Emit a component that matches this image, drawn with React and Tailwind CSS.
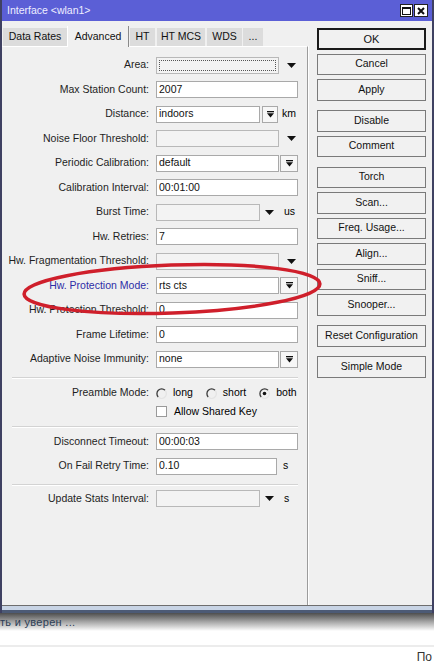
import React from "react";

/* =======================
   Small glyphs
======================= */
const DropArrow = ({ className = "" }) => (
  <svg width="9" height="5" viewBox="0 0 9 5" className={className}>
    <path d="M0 0 L9 0 L4.5 5 Z" fill="#111" />
  </svg>
);

const ComboBtn = ({ className = "" }) => (
  <div
    className={`h-[17px] border border-[#a9a9a9] bg-[#f7f7f7] flex items-center justify-center ${className}`}
  >
    <svg width="7" height="7" viewBox="0 0 7 7">
      <rect x="0" y="0" width="7" height="1.3" fill="#111" />
      <path d="M0 2.3 L7 2.3 L3.5 6.6 Z" fill="#111" />
    </svg>
  </div>
);

const Radio = ({ checked }) => (
  <svg width="11" height="11" viewBox="0 0 11 11" className="shrink-0">
    <path d="M2.3 9 A4.4 4.4 0 0 1 9 2.3" fill="none" stroke="#3a3a3a" strokeWidth="1.3" />
    <path d="M9 2.3 A4.4 4.4 0 0 1 2.3 9" fill="none" stroke="#e4e4e4" strokeWidth="1.3" />
    {checked && <circle cx="5.5" cy="5.5" r="1.8" fill="#111" />}
  </svg>
);

/* =======================
   Form pieces
======================= */
const Input = ({ className = "", value, disabled, focus }) => (
  <div
    className={`h-[17px] border flex items-center pl-[2px] text-[10.5px] text-[#111] ${
      disabled ? "bg-[#f3f3f3] border-[#b8b8b8]" : "bg-white border-[#a9a9a9]"
    } ${className}`}
  >
    {focus ? (
      <div className="w-full h-[11px] mr-[2px] border border-dotted border-[#555]" />
    ) : (
      value
    )}
  </div>
);

const Field = ({ label, blue, children, className = "h-[24.5px]" }) => (
  <div className={`flex items-center ${className}`}>
    <div
      className={`w-[147px] shrink-0 text-right whitespace-nowrap ${
        blue ? "text-[#2d2da6]" : "text-[#1e1e1e]"
      }`}
    >
      {label}:
    </div>
    <div className="ml-[7px] flex items-center">{children}</div>
  </div>
);

const Separator = ({ className = "" }) => (
  <div className={`ml-[10px] w-[286px] h-px bg-[#d3d3d3] shadow-[0_1px_0_#ffffff] ${className}`} />
);

const SideButton = ({ children, primary }) => (
  <div
    className={`h-[21.5px] w-[109px] flex items-center justify-center bg-[#f1f1f1] text-[#111] ${
      primary
        ? "border-2 border-[#1a1a1a] text-[11px]"
        : "border border-[#7a7a7a] text-[10.5px]"
    }`}
  >
    {children}
  </div>
);

const tabs = [
  { name: "Data Rates", w: "w-[64px] ml-px" },
  { name: "Advanced", w: "w-[62px]", active: true },
  { name: "HT", w: "w-[25px] ml-px" },
  { name: "HT MCS", w: "w-[48px] ml-[2px]" },
  { name: "WDS", w: "w-[35px] ml-[2px]" },
  { name: "...", w: "w-[20px] ml-px" },
];

/* =======================
   App
======================= */
export default function App() {
  return (
    <div
      className="relative w-[434px] h-[665px] overflow-hidden bg-white text-[10.5px]"
      style={{ fontFamily: '"Liberation Sans", Arial, sans-serif' }}
    >
      {/* Window */}
      <div className="w-[434px] border-x-2 border-[#3f4162] bg-[#f0f0f0]">
        {/* Title bar */}
        <div className="h-[21px] bg-[#5b5fd6] flex items-center justify-between pl-[5px] pr-[4px]">
          <span className="text-[#eeeeff] text-[10.5px]">Interface &lt;wlan1&gt;</span>
          <div className="flex gap-px">
            <div className="w-[13px] h-[13px] bg-white border border-[#222] flex items-center justify-center">
              <div className="w-[9px] h-[8px] border border-[#111] border-t-2" />
            </div>
            <div className="w-[14px] h-[13px] bg-white border border-[#222] flex items-center justify-center">
              <svg width="8" height="8" viewBox="0 0 8 8">
                <path d="M1 1 L7 7 M7 1 L1 7" stroke="#111" strokeWidth="2" />
              </svg>
            </div>
          </div>
        </div>

        {/* Body */}
        <div className="flex h-[585px] border-b border-[#6e6e6e]">
          {/* Left: tabs + panel */}
          <div className="w-[306px] flex flex-col">
            <div className="h-[25px] pt-[4px] flex items-end">
              {tabs.map((t) =>
                t.active ? (
                  <div
                    key={t.name}
                    className={`${t.w} h-[21px] bg-[#f0f0f0] border-l border-white border-r border-r-[#8a8a8a] flex items-center justify-center text-[#111] relative top-px`}
                  >
                    {t.name}
                  </div>
                ) : (
                  <div
                    key={t.name}
                    className={`${t.w} h-[18px] bg-[#dcdcdc] flex items-center justify-center text-[#111]`}
                  >
                    {t.name}
                  </div>
                )
              )}
            </div>

            <div className="flex-1 border-t border-white border-r border-r-[#9c9c9c] shadow-[1px_0_0_#ffffff] pt-[6px]">
              <Field label="Area">
                <Input className="w-[123px]" disabled focus />
                <DropArrow className="ml-[8px]" />
              </Field>
              <Field label="Max Station Count">
                <Input className="w-[142px]" value="2007" />
              </Field>
              <Field label="Distance">
                <Input className="w-[104px]" value="indoors" />
                <ComboBtn className="ml-[2px] w-[16px]" />
                <span className="ml-[4px]">km</span>
              </Field>
              <Field label="Noise Floor Threshold">
                <Input className="w-[123px]" disabled />
                <DropArrow className="ml-[8px]" />
              </Field>
              <Field label="Periodic Calibration">
                <Input className="w-[123px]" value="default" />
                <ComboBtn className="ml-px w-[18px]" />
              </Field>
              <Field label="Calibration Interval">
                <Input className="w-[142px]" value="00:01:00" />
              </Field>
              <Field label="Burst Time">
                <Input className="w-[104px]" disabled />
                <DropArrow className="ml-[5px]" />
                <span className="ml-[10px]">us</span>
              </Field>
              <Field label="Hw. Retries">
                <Input className="w-[142px]" value="7" />
              </Field>
              <Field label="Hw. Fragmentation Threshold">
                <Input className="w-[123px]" disabled />
                <DropArrow className="ml-[8px]" />
              </Field>
              <Field label="Hw. Protection Mode" blue>
                <Input className="w-[123px]" value="rts cts" />
                <ComboBtn className="ml-px w-[18px]" />
              </Field>
              <Field label="Hw. Protection Threshold">
                <Input className="w-[142px]" value="0" />
              </Field>
              <Field label="Frame Lifetime">
                <Input className="w-[142px]" value="0" />
              </Field>
              <Field label="Adaptive Noise Immunity">
                <Input className="w-[123px]" value="none" />
                <ComboBtn className="ml-px w-[18px]" />
              </Field>

              <Separator className="mt-[5px]" />

              <Field label="Preamble Mode" className="h-[19px] mt-[6px]">
                <Radio />
                <span className="ml-[6px]">long</span>
                <span className="ml-[13px]">
                  <Radio />
                </span>
                <span className="ml-[6px]">short</span>
                <span className="ml-[13px]">
                  <Radio checked />
                </span>
                <span className="ml-[6px]">both</span>
              </Field>
              <div className="flex items-center h-[18px] pl-[154px]">
                <div className="w-[11px] h-[11px] border border-[#9a9a9a] bg-white" />
                <span className="ml-[7px]">Allow Shared Key</span>
              </div>

              <Separator className="mt-[5px]" />

              <Field label="Disconnect Timeout" className="h-[24.5px] mt-[3px]">
                <Input className="w-[142px]" value="00:00:03" />
              </Field>
              <Field label="On Fail Retry Time">
                <Input className="w-[121px]" value="0.10" />
                <span className="ml-[6px]">s</span>
              </Field>

              <Separator className="mt-[5px]" />

              <Field label="Update Stats Interval" className="h-[24.5px] mt-[2px]">
                <Input className="w-[104px]" disabled />
                <DropArrow className="ml-[5px]" />
                <span className="ml-[10px]">s</span>
              </Field>
            </div>
          </div>

          {/* Right: buttons */}
          <div className="w-[124px] pt-[7px] pl-[9px] flex flex-col gap-[9.5px]">
            <div className="flex flex-col gap-[4px]">
              <SideButton primary>OK</SideButton>
              <SideButton>Cancel</SideButton>
              <SideButton>Apply</SideButton>
            </div>
            <div className="flex flex-col gap-[4px]">
              <SideButton>Disable</SideButton>
              <SideButton>Comment</SideButton>
            </div>
            <div className="flex flex-col gap-[4px]">
              <SideButton>Torch</SideButton>
              <SideButton>Scan...</SideButton>
              <SideButton>Freq. Usage...</SideButton>
              <SideButton>Align...</SideButton>
              <SideButton>Sniff...</SideButton>
              <SideButton>Snooper...</SideButton>
            </div>
            <SideButton>Reset Configuration</SideButton>
            <SideButton>Simple Mode</SideButton>
          </div>
        </div>

        {/* Bottom frame */}
        <div className="h-[4px] bg-[#c8d4e5]" />
        <div className="h-[3px] bg-[#4c5a75]" />
      </div>

      {/* Page behind the window */}
      <div className="h-[18px] bg-gradient-to-b from-[#4e4e4e] via-[#a8a8a8] to-white flex items-center">
        <span className="text-[11px] text-[#2c3e57] tracking-[0.3px]">ть и уверен ...</span>
      </div>
      <div className="h-[14px]" />
      <div className="h-[2px] bg-[#ececec]" />
      <div className="flex justify-end pr-[2px] pt-[3px]">
        <span className="text-[12px] leading-[14px] text-[#333]">По</span>
      </div>

      {/* Red annotation ellipse */}
      <svg
        className="absolute top-0 left-0 pointer-events-none"
        width="434"
        height="665"
        viewBox="0 0 434 665"
      >
        <ellipse
          cx="172"
          cy="289"
          rx="148"
          ry="24"
          transform="rotate(-2 172 289)"
          fill="none"
          stroke="#cf1f2b"
          strokeWidth="3.5"
        />
      </svg>
    </div>
  );
}
